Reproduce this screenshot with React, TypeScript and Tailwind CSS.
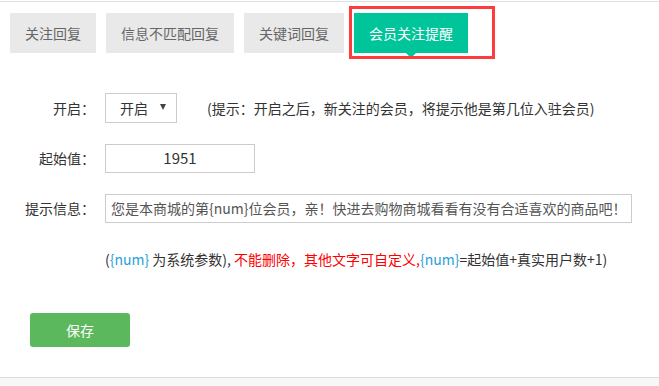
import React from "react";

const tabs = [
  { label: "关注回复", width: "w-[86px]" },
  { label: "信息不匹配回复", width: "w-[128px]" },
  { label: "关键词回复", width: "w-[100px]" },
];

const font = { fontFamily: '"Microsoft YaHei", "Noto Sans CJK SC", "Liberation Sans", sans-serif' };

const App: React.FC = () => {
  return (
    <div className="relative flex h-[386px] w-[659px] flex-col bg-white text-[14px] text-[#333]" style={font}>
      <div className="mt-px border-t border-[#e0e0e0]" />

      {/* tab bar */}
      <div className="mt-[11px] flex gap-[10px] pl-[10px]">
        {tabs.map((t) => (
          <div
            key={t.label}
            className={`${t.width} flex h-[40px] items-center justify-center bg-[#e9e9e9] leading-none text-[#666]`}
          >
            {t.label}
          </div>
        ))}
        <div className="relative flex h-[40px] w-[114px] items-center justify-center bg-[#00c59b] leading-none text-white">
          会员关注提醒
          <span className="absolute left-1/2 top-full -translate-x-1/2 border-x-[5px] border-t-[5px] border-x-transparent border-t-[#00c59b]" />
        </div>
      </div>

      {/* red annotation box */}
      <div className="absolute left-[349px] top-[6px] h-[53px] w-[146px] border-[3px] border-[#ff3c3c]" />

      {/* form */}
      <div className="mt-[40px] flex flex-col gap-[21px]">
        <div className="flex items-center">
          <div className="w-[95px] text-right">开启：</div>
          <div className="ml-[10px] flex h-[30px] w-[72px] items-center border border-[#ccc] pl-[14px] pr-[10px]">
            <span>开启</span>
            <span className="ml-auto mb-[3px] border-x-[3px] border-t-[6px] border-x-transparent border-t-[#444]" />
          </div>
          <div className="ml-[30px]">(提示：开启之后，新关注的会员，将提示他是第几位入驻会员)</div>
        </div>

        <div className="flex items-center">
          <div className="w-[95px] text-right">起始值：</div>
          <div className="ml-[10px] flex h-[29px] w-[150px] items-center justify-center border border-[#ccc] text-[15px]">
            1951
          </div>
        </div>

        <div className="flex items-center">
          <div className="w-[95px] text-right">提示信息：</div>
          <div className="ml-[10px] flex h-[29px] w-[527px] items-center border border-[#ccc] pl-[5px] text-[#555]">
            您是本商城的第{"{num}"}位会员，亲！快进去购物商城看看有没有合适喜欢的商品吧！
          </div>
        </div>
      </div>

      <div className="ml-[105px] mt-[26px]">
        (<span className="text-[#2a9fd8]">{"{num}"}</span> 为系统参数),{" "}
        <span className="text-[#ff0000]">不能删除，其他文字可自定义,</span>
        <span className="text-[#2a9fd8]">{"{num}"}</span>=起始值+真实用户数+1)
      </div>

      <div className="ml-[30px] mt-[43px]">
        <button
          type="button"
          className="flex h-[34px] w-[100px] items-center justify-center rounded-[3px] bg-[#5cb85c] text-white"
        >
          保存
        </button>
      </div>

      <div className="mt-auto h-[9px] border-t border-[#dcdcdc] bg-[#f7f7f7]" />
    </div>
  );
};

export default App;
